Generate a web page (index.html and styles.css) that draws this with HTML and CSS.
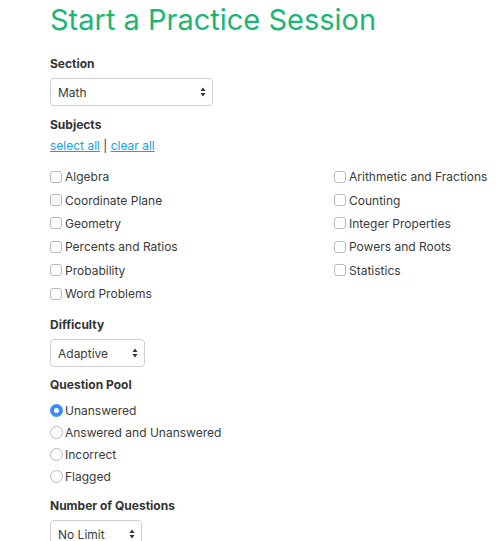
FILE: index.html
```
<!DOCTYPE html>
<html>
<head>
<meta charset="utf-8">
<link rel="stylesheet" href="styles.css">
</head>
<body>
<div class="page">
  <h1 class="title">Start a Practice Session</h1>

  <div class="label label-section">Section</div>
  <div class="select select-section">
    <span class="select-text">Math</span>
    <svg class="arrows" width="6" height="10" viewBox="0 0 6 10"><path d="M3 0.5 L5.5 4 L0.5 4 Z M3 9.5 L5.5 6 L0.5 6 Z" fill="#333"/></svg>
  </div>

  <div class="label label-subjects">Subjects</div>
  <div class="links"><a href="#">select all</a> | <a href="#">clear all</a></div>

  <div class="subjects">
    <div class="col">
      <div class="row"><span class="cb"></span>Algebra</div>
      <div class="row"><span class="cb"></span>Coordinate Plane</div>
      <div class="row"><span class="cb"></span>Geometry</div>
      <div class="row"><span class="cb"></span>Percents and Ratios</div>
      <div class="row"><span class="cb"></span>Probability</div>
      <div class="row"><span class="cb"></span>Word Problems</div>
    </div>
    <div class="col">
      <div class="row"><span class="cb"></span>Arithmetic and Fractions</div>
      <div class="row"><span class="cb"></span>Counting</div>
      <div class="row"><span class="cb"></span>Integer Properties</div>
      <div class="row"><span class="cb"></span>Powers and Roots</div>
      <div class="row"><span class="cb"></span>Statistics</div>
    </div>
  </div>

  <div class="label label-difficulty">Difficulty</div>
  <div class="select select-difficulty">
    <span class="select-text">Adaptive</span>
    <svg class="arrows" width="6" height="10" viewBox="0 0 6 10"><path d="M3 0.5 L5.5 4 L0.5 4 Z M3 9.5 L5.5 6 L0.5 6 Z" fill="#333"/></svg>
  </div>

  <div class="label label-pool">Question Pool</div>
  <div class="radios">
    <div class="rrow"><span class="rb checked"></span>Unanswered</div>
    <div class="rrow"><span class="rb"></span>Answered and Unanswered</div>
    <div class="rrow"><span class="rb"></span>Incorrect</div>
    <div class="rrow"><span class="rb"></span>Flagged</div>
  </div>

  <div class="label label-number">Number of Questions</div>
  <div class="select select-number">
    <span class="select-text">No Limit</span>
    <svg class="arrows" width="6" height="10" viewBox="0 0 6 10"><path d="M3 0.5 L5.5 4 L0.5 4 Z M3 9.5 L5.5 6 L0.5 6 Z" fill="#333"/></svg>
  </div>
</div>
</body>
</html>
```
FILE: styles.css
```
html, body {
  margin: 0;
  padding: 0;
  background: #fff;
}
body {
  font-family: Inter, "Liberation Sans", Arial, sans-serif;
  font-size: 12px;
  color: #3a3a3a;
}
.page {
  padding-left: 50px;
}
.title {
  margin: 0;
  font-size: 29px;
  font-weight: 400;
  line-height: 40px;
  color: #1db574;
}
.label {
  font-weight: 700;
  line-height: 18px;
  color: #333;
}
.label-section { margin-top: 15px; }
.label-subjects { margin-top: 10px; }
.label-difficulty { margin-top: 11px; }
.label-pool { margin-top: 9px; }
.label-number { margin-top: 10px; }

.select {
  position: relative;
  box-sizing: border-box;
  height: 28px;
  margin-top: 5px;
  border: 1px solid #cfcfcf;
  border-radius: 4px;
  background: #fff;
  display: flex;
  align-items: center;
  padding-left: 7px;
}
.select-section { width: 163px; }
.select-difficulty { width: 95px; }
.select-number { width: 92px; }
.arrows {
  position: absolute;
  right: 6px;
  top: 8px;
}
.links {
  margin-top: 3px;
  line-height: 18px;
}
.links a {
  color: #1a9fe0;
  text-decoration: underline;
}
.subjects {
  margin-top: 10px;
  display: grid;
  grid-template-columns: 284px 1fr;
}
.row {
  height: 23.4px;
  display: flex;
  align-items: center;
}
.cb {
  box-sizing: border-box;
  width: 12px;
  height: 12px;
  border: 1px solid #b9b9b9;
  border-radius: 3px;
  margin-right: 3px;
  background: #fff;
}
.radios {
  margin-top: 5px;
}
.rrow {
  height: 22px;
  display: flex;
  align-items: center;
}
.rb {
  box-sizing: border-box;
  width: 13px;
  height: 13px;
  border: 1px solid #b9b9b9;
  border-radius: 50%;
  margin-right: 2px;
  background: #fff;
}
.rb.checked {
  border: 4px solid #3a8ef6;
  background: #fff;
}
```
